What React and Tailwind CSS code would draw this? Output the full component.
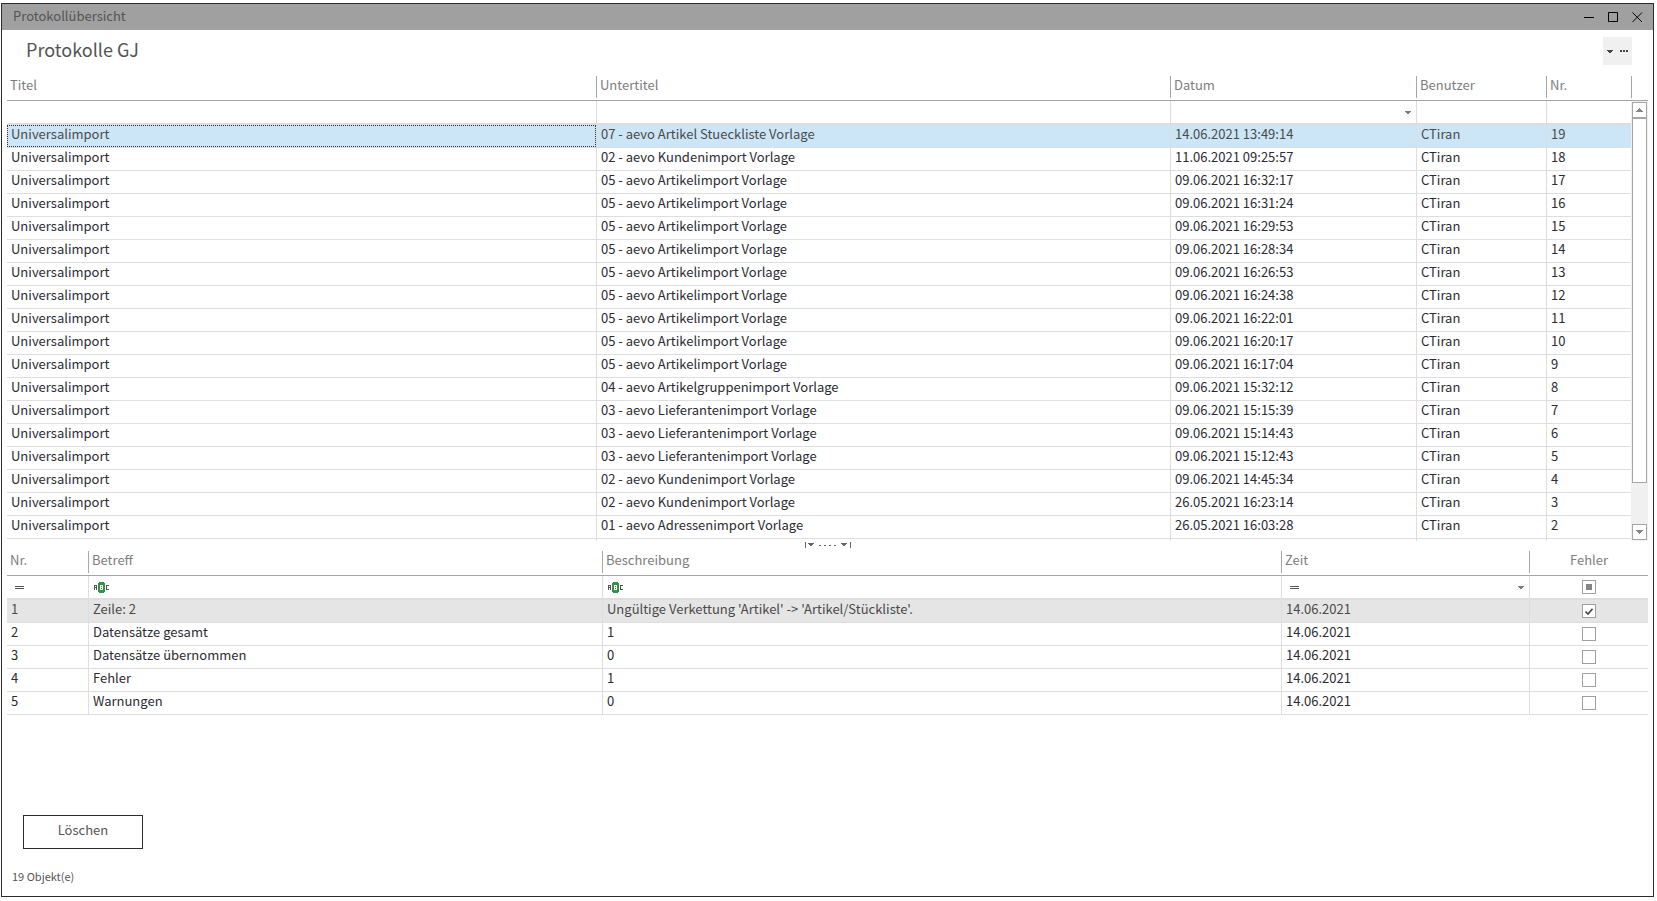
import React from 'react';

const logs = [
  ['07 - aevo Artikel Stueckliste Vorlage', '14.06.2021 13:49:14', 19],
  ['02 - aevo Kundenimport Vorlage', '11.06.2021 09:25:57', 18],
  ['05 - aevo Artikelimport Vorlage', '09.06.2021 16:32:17', 17],
  ['05 - aevo Artikelimport Vorlage', '09.06.2021 16:31:24', 16],
  ['05 - aevo Artikelimport Vorlage', '09.06.2021 16:29:53', 15],
  ['05 - aevo Artikelimport Vorlage', '09.06.2021 16:28:34', 14],
  ['05 - aevo Artikelimport Vorlage', '09.06.2021 16:26:53', 13],
  ['05 - aevo Artikelimport Vorlage', '09.06.2021 16:24:38', 12],
  ['05 - aevo Artikelimport Vorlage', '09.06.2021 16:22:01', 11],
  ['05 - aevo Artikelimport Vorlage', '09.06.2021 16:20:17', 10],
  ['05 - aevo Artikelimport Vorlage', '09.06.2021 16:17:04', 9],
  ['04 - aevo Artikelgruppenimport Vorlage', '09.06.2021 15:32:12', 8],
  ['03 - aevo Lieferantenimport Vorlage', '09.06.2021 15:15:39', 7],
  ['03 - aevo Lieferantenimport Vorlage', '09.06.2021 15:14:43', 6],
  ['03 - aevo Lieferantenimport Vorlage', '09.06.2021 15:12:43', 5],
  ['02 - aevo Kundenimport Vorlage', '09.06.2021 14:45:34', 4],
  ['02 - aevo Kundenimport Vorlage', '26.05.2021 16:23:14', 3],
  ['01 - aevo Adressenimport Vorlage', '26.05.2021 16:03:28', 2],
];

const details = [
  ['Zeile: 2', "Ungültige Verkettung 'Artikel' -> 'Artikel/Stückliste'.", true],
  ['Datensätze gesamt', '1', false],
  ['Datensätze übernommen', '0', false],
  ['Fehler', '1', false],
  ['Warnungen', '0', false],
];

function Caret({ up }) {
  return (
    <svg width="7" height="4" viewBox="0 0 7 4" fill="currentColor" shapeRendering="crispEdges" className={up ? 'rotate-180' : ''}>
      <path d="M0 0h7v1H6v1H5v1H4v1H3V3H2V2H1V1H0z" />
    </svg>
  );
}

function SmallCaret() {
  return (
    <svg width="6" height="3" viewBox="0 0 6 3" fill="currentColor" shapeRendering="crispEdges">
      <path d="M0 0h6v1H5v1H4v1H2V2H1V1H0z" />
    </svg>
  );
}

function EqualsIcon() {
  return (
    <svg width="12" height="3" viewBox="0 0 12 3" fill="#555" shapeRendering="crispEdges">
      <path d="M3 0h9v1H3zM3 2h9v1H3z" />
    </svg>
  );
}

// "contains" filter symbol
function ContainsIcon() {
  return (
    <svg width="16" height="11" viewBox="0 0 16 11" shapeRendering="crispEdges">
      <path fill="#555" d="M0 3h3v5H2V6H1v2H0zM1 4v1h1V4zM12 3h3v1h-2v3h2v1h-3z" fillRule="evenodd" />
      <path fill="#2f9448" d="M4 1h1V0h5v1h1v9h-1v1H5v-1H4z" />
      <path fill="#fff" d="M6 3h3v5H6z" />
      <path fill="#2f9448" d="M7 4h1v1H7zM7 6h1v1H7z" />
    </svg>
  );
}

function Head({ children, last, center }) {
  return (
    <th className="p-0 pb-[2px] border-b border-[#a6a6a6] font-normal text-[#7d7d7d]">
      <div className={`h-[22px] leading-[18px] truncate ${last ? '' : 'border-r border-[#a6a6a6]'} ${center ? 'text-center' : 'text-left pl-[3px]'}`}>
        {children}
      </div>
    </th>
  );
}

function FilterCell({ label, icon, dropdown, last }) {
  return (
    <td className={`h-6 p-0 border-b-2 border-[#dedede] ${last ? '' : 'border-r'}`}>
      <div className="flex items-center h-[22px]">
        {icon && <span className="pl-[5px]">{icon}</span>}
        <input type="text" aria-label={label} className="flex-1 min-w-0 h-5 bg-transparent outline-none px-1" />
        {dropdown && (
          <button aria-label={`${label} auswählen`} className="pr-[5px] pt-px text-[#7d7d7d]">
            <SmallCaret />
          </button>
        )}
      </div>
    </td>
  );
}

function Cell({ children, selected, last, focused }) {
  return (
    <td className={`h-[23px] p-0 border-b border-[#dedede] ${last ? '' : 'border-r'} ${selected ? 'text-[#4a4a4a]' : 'text-[#2b2b33]'}`}>
      <div className={`h-[22px] truncate ${focused ? 'border border-dotted border-[#333] pl-[3px] leading-[16px]' : 'pl-1 leading-[18px]'}`}>
        {children}
      </div>
    </td>
  );
}

function Check({ label, checked, mixed }) {
  return (
    <label className="inline-grid place-items-center align-top">
      <input
        type="checkbox"
        aria-label={label}
        defaultChecked={checked}
        className="appearance-none w-[14px] h-[14px] bg-white border border-[#a0a0a0] [grid-area:1/1]"
      />
      {mixed && <span className="w-[6px] h-[6px] bg-[#868686] [grid-area:1/1]" />}
      {checked && (
        <svg width="8" height="7" viewBox="0 0 8 7" fill="none" stroke="#444" strokeWidth="1.6" className="[grid-area:1/1]">
          <path d="M0.5 3.5L3 6L7.5 0.8" />
        </svg>
      )}
    </label>
  );
}

function ScrollBar() {
  return (
    <div className="flex flex-col w-[17px] shrink-0">
      <div className="h-[25px] border-b border-[#a6a6a6]">
        <div className="h-[22px] border-l border-[#a6a6a6]" />
      </div>
      <div className="flex-1 flex flex-col items-center bg-[#f0f0f0] pt-px pr-px text-[#868686]">
        <button aria-label="Nach oben" className="w-[15px] h-4 flex items-center justify-center bg-white border border-[#a6a6a6]">
          <Caret up />
        </button>
        <div className="w-[15px] h-[365px] bg-white border border-[#a6a6a6]" />
        <div className="flex-1" />
        <button aria-label="Nach unten" className="w-[15px] h-4 flex items-center justify-center bg-white border border-[#a6a6a6] mb-px">
          <Caret />
        </button>
      </div>
    </div>
  );
}

export default function App() {
  return (
    <div className="min-h-screen flex flex-col bg-white pt-[3px] pr-[3px] pb-1 pl-px text-[13px] font-['Noto_Sans_CJK_SC','Noto_Sans',sans-serif]">
      <div className="flex-1 flex flex-col border border-[#2b2b2b]">
        <header className="flex items-center justify-between h-[26px] bg-[#a0a0a0] pl-[11px] pr-[10px]">
          <h1 className="text-[#555] leading-[20px] pb-[2px]">Protokollübersicht</h1>
          <div className="flex gap-[13px] text-black">
            <button aria-label="Minimieren">
              <svg width="11" height="11" stroke="currentColor" shapeRendering="crispEdges"><path d="M0 5.5h10" /></svg>
            </button>
            <button aria-label="Maximieren">
              <svg width="11" height="11" stroke="currentColor" fill="none"><path d="M.5 .5h9v9h-9z" /></svg>
            </button>
            <button aria-label="Schließen">
              <svg width="11" height="11" stroke="currentColor"><path d="M.5 .5l9.500 9.500M10 .5L.5 10" /></svg>
            </button>
          </div>
        </header>

        <div className="flex items-center justify-between h-[46px] pl-6 pr-[21px]">
          <h2 className="text-[18px] text-[#555] leading-[24px] pb-[8px]">Protokolle GJ</h2>
          <button aria-label="Optionen" className="flex items-center justify-center gap-[7px] w-[29px] h-7 mb-1 bg-[#f0f0f0] text-[#444]">
            <SmallCaret />
            <svg width="8" height="2" fill="currentColor" shapeRendering="crispEdges"><path d="M0 0h2v2H0zM3 0h2v2H3zM6 0h2v2H6z" /></svg>
          </button>
        </div>

        <main className="flex-1 flex flex-col pl-[5px] pr-[5px]">
          <div className="flex">
            <table className="flex-1 w-full table-fixed border-separate border-spacing-0">
              <colgroup>
                <col className="w-[590px]" />
                <col className="w-[574px]" />
                <col className="w-[246px]" />
                <col className="w-[130px]" />
                <col className="w-[84px]" />
              </colgroup>
              <thead>
                <tr>
                  <Head>Titel</Head>
                  <Head>Untertitel</Head>
                  <Head>Datum</Head>
                  <Head>Benutzer</Head>
                  <Head last>Nr.</Head>
                </tr>
              </thead>
              <tbody>
                <tr>
                  <FilterCell label="Titel" />
                  <FilterCell label="Untertitel" />
                  <FilterCell label="Datum" dropdown />
                  <FilterCell label="Benutzer" />
                  <FilterCell label="Nr." last />
                </tr>
                {logs.map(([subtitle, date, nr], i) => (
                  <tr key={nr} className={i === 0 ? 'bg-[#cde6f7]' : ''}>
                    <Cell selected={i === 0} focused={i === 0}>Universalimport</Cell>
                    <Cell selected={i === 0}>{subtitle}</Cell>
                    <Cell selected={i === 0}>{date}</Cell>
                    <Cell selected={i === 0}>CTiran</Cell>
                    <Cell selected={i === 0} last>{nr}</Cell>
                  </tr>
                ))}
                <tr>
                  <td className="h-[2px] p-0 border-r border-[#dedede]" />
                  <td className="p-0 border-r border-[#dedede]" />
                  <td className="p-0 border-r border-[#dedede]" />
                  <td className="p-0 border-r border-[#dedede]" />
                  <td className="p-0" />
                </tr>
              </tbody>
            </table>
            <ScrollBar />
          </div>

          <div className="flex items-center justify-center h-[10px] pb-[2px]">
            <svg width="46" height="6" fill="#666" shapeRendering="crispEdges">
              <path d="M0 0h1v6H0zM45 0h1v6h-1zM3 1h6v1H8v1H7v1H5V3H4V2H3zM36 1h6v1h-1v1h-1v1h-2V3h-1V2h-1z" />
              <path d="M14 3h2v1h-2zM19 3h2v1h-2zM24 3h2v1h-2zM29 3h2v1h-2z" />
            </svg>
          </div>

          <table className="w-full table-fixed border-separate border-spacing-0">
            <colgroup>
              <col className="w-[82px]" />
              <col className="w-[514px]" />
              <col className="w-[679px]" />
              <col className="w-[248px]" />
              <col className="w-[118px]" />
            </colgroup>
            <thead>
              <tr>
                <Head>Nr.</Head>
                <Head>Betreff</Head>
                <Head>Beschreibung</Head>
                <Head>Zeit</Head>
                <Head last center>Fehler</Head>
              </tr>
            </thead>
            <tbody>
              <tr>
                <FilterCell label="Nr." icon={<EqualsIcon />} />
                <FilterCell label="Betreff" icon={<ContainsIcon />} />
                <FilterCell label="Beschreibung" icon={<ContainsIcon />} />
                <FilterCell label="Zeit" icon={<EqualsIcon />} dropdown />
                <td className="p-0 border-b-2 border-[#dedede] text-center align-top pt-1 leading-none">
                  <Check label="Fehler filtern" mixed />
                </td>
              </tr>
              {details.map(([subject, text, error], i) => (
                <tr key={subject} className={i === 0 ? 'bg-[#e5e5e5]' : ''}>
                  <Cell selected={i === 0}>{i + 1}</Cell>
                  <Cell selected={i === 0}>{subject}</Cell>
                  <Cell selected={i === 0}>{text}</Cell>
                  <Cell selected={i === 0}>14.06.2021</Cell>
                  <td className="p-0 pt-1 border-b border-[#dedede] text-center align-top leading-none">
                    <Check label={`Fehler in ${subject}`} checked={error} />
                  </td>
                </tr>
              ))}
            </tbody>
          </table>

          <div className="mt-auto pl-4">
            <button className="w-[120px] h-[34px] border border-[#2b2b2b] text-[#555] leading-[28px] pb-1">Löschen</button>
          </div>
        </main>

        <footer className="mt-[18px] mb-[11px] pl-[10px] text-[11px] leading-[18px] text-[#555]">19 Objekt(e)</footer>
      </div>
    </div>
  );
}
